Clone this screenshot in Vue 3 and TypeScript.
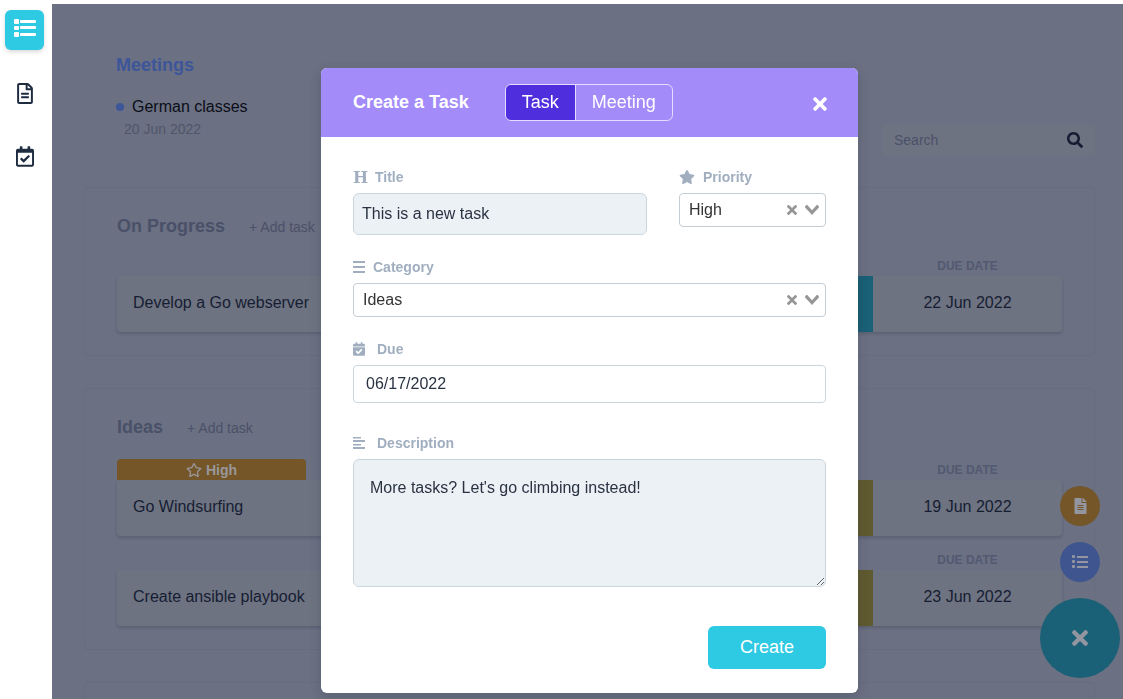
<script setup lang="ts">
import { ref } from 'vue'

interface Task {
  name: string
  due: string
  status: 'ideas' | 'progress'
  high?: boolean
}
interface Group {
  title: string
  tasks: Task[]
}

const groups: Group[] = [
  { title: 'On Progress', tasks: [{ name: 'Develop a Go webserver', due: '22 Jun 2022', status: 'progress' }] },
  {
    title: 'Ideas',
    tasks: [
      { name: 'Go Windsurfing', due: '19 Jun 2022', status: 'ideas', high: true },
      { name: 'Create ansible playbook', due: '23 Jun 2022', status: 'ideas' },
    ],
  },
]

const kind = ref<'Task' | 'Meeting'>('Task')
const title = ref('This is a new task')
const priority = ref('High')
const category = ref('Ideas')
const due = ref('06/17/2022')
const description = ref("More tasks? Let's go climbing instead!")

const times =
  'M242.72 256l100.07-100.07c12.28-12.28 12.28-32.19 0-44.48l-22.24-22.24c-12.28-12.28-32.19-12.28-44.48 0L176 189.28 75.93 89.21c-12.28-12.28-32.19-12.28-44.48 0L9.21 111.45c-12.28 12.28-12.28 32.19 0 44.48L109.28 256 9.21 356.07c-12.28 12.28-12.28 32.19 0 44.48l22.24 22.24c12.28 12.28 32.2 12.28 44.48 0L176 322.72l100.07 100.07c12.28 12.28 32.2 12.28 44.48 0l22.24-22.24c12.28-12.28 12.28-32.19 0-44.48L242.72 256z'
const clearMark =
  'M6.895455 5l2.842897-2.842898c.348864-.348863.348864-.914488 0-1.263636L9.106534.261648c-.348864-.348864-.914489-.348864-1.263636 0L5 3.104545 2.157102.261648c-.348863-.348864-.914488-.348864-1.263636 0L.261648.893466c-.348864.348864-.348864.914489 0 1.263636L3.104545 5 .261648 7.842898c-.348864.348863-.348864.914488 0 1.263636l.631818.631818c.348864.348864.914773.348864 1.263636 0L5 6.895455l2.842898 2.842897c.348863.348864.914772.348864 1.263636 0l.631818-.631818c.348864-.348864.348864-.914489 0-1.263636L6.895455 5z'
const chevron =
  'M9.211364 7.59931l4.48338-4.867229c.407008-.441854.407008-1.158247 0-1.60046l-.73712-.80023c-.407008-.441854-1.066904-.441854-1.474243 0L7 5.198617 2.51662.33139c-.407008-.441853-1.066904-.441853-1.474243 0l-.737121.80023c-.407008.441854-.407008 1.158248 0 1.600461l4.48338 4.867228L7 10l2.211364-2.40069z'
</script>

<template>
  <div class="shell">
    <nav class="sidebar" aria-label="Main">
      <button class="nav active" type="button" aria-label="Tasks">
        <svg width="22" height="18" viewBox="0 0 22 18" fill="currentColor">
          <rect x="0" y="0" width="5" height="5" rx="1" /><rect x="6" y="1" width="16" height="3" rx="1" />
          <rect x="0" y="7" width="5" height="4" rx="1" /><rect x="6" y="7" width="16" height="3" rx="1" />
          <rect x="0" y="13" width="5" height="5" rx="1" /><rect x="6" y="14" width="16" height="3" rx="1" />
        </svg>
      </button>
      <button class="nav" type="button" aria-label="Notes">
        <svg width="16" height="21" viewBox="0 0 384 512" fill="currentColor">
          <path d="M288 248v28c0 6.600-5.400 12-12 12H108c-6.600 0-12-5.400-12-12v-28c0-6.600 5.400-12 12-12h168c6.600 0 12 5.400 12 12zm-12 72H108c-6.600 0-12 5.400-12 12v28c0 6.600 5.400 12 12 12h168c6.600 0 12-5.400 12-12v-28c0-6.600-5.400-12-12-12zm108-188.100V464c0 26.500-21.500 48-48 48H48c-26.500 0-48-21.500-48-48V48C0 21.500 21.500 0 48 0h204.100C264.800 0 277 5.100 286 14.100L369.900 98c9 8.900 14.100 21.200 14.100 33.900zm-128-80V128h76.100L256 51.900zM336 464V176H232c-13.300 0-24-10.700-24-24V48H48v416h288z" />
        </svg>
      </button>
      <button class="nav" type="button" aria-label="Meetings">
        <svg width="18" height="21" viewBox="0 0 448 512" fill="currentColor">
          <path d="M400 64h-48V12c0-6.627-5.373-12-12-12h-40c-6.627 0-12 5.373-12 12v52H160V12c0-6.627-5.373-12-12-12h-40c-6.627 0-12 5.373-12 12v52H48C21.490 64 0 85.490 0 112v352c0 26.510 21.490 48 48 48h352c26.510 0 48-21.490 48-48V112c0-26.510-21.490-48-48-48zm-6 400H54a6 6 0 0 1-6-6V160h352v298a6 6 0 0 1-6 6zm-52.849-200.650L198.842 404.519c-4.705 4.667-12.303 4.637-16.971-.068l-75.091-75.699c-4.667-4.705-4.637-12.303.068-16.971l22.719-22.536c4.705-4.667 12.303-4.637 16.970.069l44.104 44.461 111.072-110.181c4.705-4.667 12.303-4.637 16.971.068l22.536 22.718c4.667 4.705 4.636 12.303-.069 16.970z" />
        </svg>
      </button>
    </nav>

    <main class="stage">
      <header class="top">
        <section class="meetings">
          <h2>Meetings</h2>
          <p class="meeting"><i class="dot"></i>German classes</p>
          <p class="when">20 Jun 2022</p>
        </section>
        <div class="search">
          <input type="text" placeholder="Search" aria-label="Search" />
          <button type="button" aria-label="Search tasks">
            <svg width="16" height="16" viewBox="0 0 512 512" fill="currentColor">
              <path d="M505 442.700L405.300 343c-4.500-4.500-10.600-7-17-7H372c27.600-35.300 44-79.700 44-128C416 93.100 322.900 0 208 0S0 93.100 0 208s93.100 208 208 208c48.300 0 92.700-16.400 128-44v16.300c0 6.400 2.500 12.500 7 17l99.700 99.700c9.400 9.400 24.600 9.400 33.900 0l28.300-28.300c9.400-9.400 9.400-24.600.100-34zM208 336c-70.700 0-128-57.200-128-128 0-70.700 57.200-128 128-128 70.700 0 128 57.200 128 128 0 70.700-57.200 128-128 128z" />
            </svg>
          </button>
        </div>
      </header>

      <section v-for="g in groups" :key="g.title" class="panel">
        <div class="panel-head">
          <h3>{{ g.title }}</h3>
          <button type="button">+ Add task</button>
        </div>
        <div class="tasks">
          <article v-for="t in g.tasks" :key="t.name" class="task">
            <div class="captions" :class="{ flagged: t.high }">
              <span v-if="t.high" class="badge">
                <svg width="16" height="14" viewBox="0 0 576 512" fill="currentColor">
                  <path d="M528.100 171.500L382 150.200 316.700 17.800c-11.700-23.600-45.600-23.900-57.400 0L194 150.200 47.900 171.500c-26.200 3.800-36.700 36.100-17.700 54.600l105.700 103-25 145.500c-4.500 26.300 23.200 46 46.400 33.700L288 439.600l130.700 68.700c23.200 12.200 50.900-7.400 46.400-33.700l-25-145.500 105.700-103c19-18.500 8.500-50.800-17.700-54.600zM388.600 312.300l23.700 138.400L288 385.400l-124.300 65.300 23.700-138.400-100.600-98 139-20.200 62.200-126 62.200 126 139 20.200-100.600 98z" />
                </svg>
                High
              </span>
              <span class="due-label">DUE DATE</span>
            </div>
            <div class="card">
              <span class="name">{{ t.name }}</span>
              <span class="status" :class="t.status"></span>
              <span class="date">{{ t.due }}</span>
            </div>
          </article>
        </div>
      </section>
      <section class="panel rest"></section>
    </main>

    <div class="fabs">
      <button class="fab note" type="button" aria-label="New note">
        <svg width="13" height="16" viewBox="0 0 384 512" fill="currentColor">
          <path d="M224 136V0H24C10.700 0 0 10.700 0 24v464c0 13.300 10.700 24 24 24h336c13.300 0 24-10.700 24-24V160H248c-13.200 0-24-10.800-24-24zm64 236c0 6.600-5.400 12-12 12H108c-6.600 0-12-5.400-12-12v-8c0-6.600 5.400-12 12-12h168c6.600 0 12 5.400 12 12v8zm0-64c0 6.600-5.400 12-12 12H108c-6.600 0-12-5.400-12-12v-8c0-6.600 5.400-12 12-12h168c6.600 0 12 5.400 12 12v8zm0-72v8c0 6.600-5.400 12-12 12H108c-6.600 0-12-5.400-12-12v-8c0-6.600 5.400-12 12-12h168c6.600 0 12 5.400 12 12zm96-114.100v6.100H256V0h6.100c6.400 0 12.500 2.500 17 7l97.900 98c4.500 4.500 7 10.600 7 16.900z" />
        </svg>
      </button>
      <button class="fab list" type="button" aria-label="New task">
        <svg width="16" height="14" viewBox="0 0 16 14" fill="currentColor">
          <rect x="0" y="0" width="3" height="3" rx="1" /><rect x="5" y="1" width="11" height="2" />
          <rect x="0" y="5" width="3" height="3" rx="1" /><rect x="5" y="6" width="11" height="2" />
          <rect x="0" y="10" width="3" height="3" rx="1" /><rect x="5" y="11" width="11" height="2" />
        </svg>
      </button>
      <button class="fab main" type="button" aria-label="Close menu">
        <svg width="16" height="24" viewBox="0 0 352 512" fill="currentColor"><path :d="times" /></svg>
      </button>
    </div>

    <div class="overlay">
      <form class="modal" role="dialog" aria-labelledby="modal-title" @submit.prevent>
        <header class="modal-head">
          <h1 id="modal-title">Create a Task</h1>
          <div class="toggle">
            <button type="button" :class="{ on: kind === 'Task' }" @click="kind = 'Task'">Task</button>
            <button type="button" :class="{ on: kind === 'Meeting' }" @click="kind = 'Meeting'">Meeting</button>
          </div>
          <button class="close" type="button" aria-label="Close">
            <svg width="14" height="20" viewBox="0 0 352 512" fill="currentColor"><path :d="times" /></svg>
          </button>
        </header>

        <div class="modal-body">
          <div class="row">
            <div class="field grow">
              <label for="f-title"><span class="h-mark" aria-hidden="true">H</span>Title</label>
              <input id="f-title" v-model="title" class="text tinted" type="text" />
            </div>
            <div class="field narrow">
              <label for="f-priority">
                <svg width="16" height="14" viewBox="0 0 576 512" fill="currentColor">
                  <path d="M259.300 17.800L194 150.200 47.900 171.500c-26.200 3.800-36.700 36.100-17.700 54.600l105.700 103-25 145.500c-4.500 26.300 23.200 46 46.400 33.700L288 439.600l130.700 68.700c23.200 12.200 50.900-7.400 46.400-33.700l-25-145.500 105.700-103c19-18.500 8.500-50.800-17.700-54.600L382 150.200 316.700 17.800c-11.700-23.600-45.600-23.900-57.400 0z" />
                </svg>Priority
              </label>
              <div class="pick">
                <select id="f-priority" v-model="priority"><option>High</option><option>Low</option></select>
                <div class="marks">
                  <button type="button" aria-label="Clear priority" @click="priority = ''">
                    <svg width="10" height="10" fill="currentColor"><path :d="clearMark" /></svg>
                  </button>
                  <svg width="14" height="10" fill="currentColor"><path :d="chevron" /></svg>
                </div>
              </div>
            </div>
          </div>

          <div class="field">
            <label for="f-category">
              <svg width="12" height="12" viewBox="0 0 12 12" fill="currentColor">
                <rect x="0" y="0" width="12" height="2" /><rect x="0" y="5" width="12" height="2" /><rect x="0" y="10" width="12" height="2" />
              </svg>Category
            </label>
            <div class="pick">
              <select id="f-category" v-model="category"><option>Ideas</option><option>On Progress</option></select>
              <div class="marks">
                <button type="button" aria-label="Clear category" @click="category = ''">
                  <svg width="10" height="10" fill="currentColor"><path :d="clearMark" /></svg>
                </button>
                <svg width="14" height="10" fill="currentColor"><path :d="chevron" /></svg>
              </div>
            </div>
          </div>

          <div class="field">
            <label for="f-due" class="wide">
              <svg width="12" height="14" viewBox="0 0 448 512" fill="currentColor">
                <path d="M436 160H12c-6.627 0-12-5.373-12-12v-36c0-26.510 21.490-48 48-48h48V12c0-6.627 5.373-12 12-12h40c6.627 0 12 5.373 12 12v52h128V12c0-6.627 5.373-12 12-12h40c6.627 0 12 5.373 12 12v52h48c26.510 0 48 21.490 48 48v36c0 6.627-5.373 12-12 12zM12 192h424c6.627 0 12 5.373 12 12v260c0 26.510-21.490 48-48 48H48c-26.510 0-48-21.490-48-48V204c0-6.627 5.373-12 12-12zm333.296 95.947l-28.169-28.398c-4.667-4.705-12.265-4.736-16.970-.068L194.120 364.665l-45.980-46.352c-4.667-4.705-12.266-4.736-16.971-.068l-28.397 28.170c-4.705 4.667-4.736 12.265-.068 16.970l82.601 83.269c4.667 4.705 12.265 4.736 16.970.068l142.953-141.805c4.705-4.667 4.736-12.265.068-16.970z" />
              </svg>Due
            </label>
            <input id="f-due" v-model="due" class="text date-input" type="text" />
          </div>

          <div class="field last">
            <label for="f-desc" class="wide">
              <svg width="12" height="12" viewBox="0 0 12 12" fill="currentColor">
                <rect x="0" y="0" width="8" height="1.500" /><rect x="0" y="3" width="12" height="2" />
                <rect x="0" y="7" width="8" height="1.500" /><rect x="0" y="10" width="12" height="2" />
              </svg>Description
            </label>
            <textarea id="f-desc" v-model="description" class="text tinted"></textarea>
          </div>

          <button class="create" type="submit">Create</button>
        </div>
      </form>
    </div>
  </div>
</template>

<style>
body {
  background: #ffffff;
}
</style>

<style scoped>
.shell,
.shell * {
  box-sizing: border-box;
}
.shell {
  display: flex;
  height: 100vh;
  overflow: hidden;
  font-family: 'Liberation Sans', Arial, sans-serif;
  font-size: 16px;
  color: #161d33;
}
h1, h2, h3, p {
  margin: 0;
}
button, input, select, textarea {
  font: inherit;
  color: inherit;
  margin: 0;
}
button {
  border: 0;
  padding: 0;
  background: none;
  cursor: pointer;
}
svg {
  display: block;
  flex: none;
}

.sidebar {
  width: 52px;
  flex: none;
  display: flex;
  flex-direction: column;
  gap: 23px;
  padding: 10px 8px 0 5px;
}
.nav {
  height: 40px;
  display: flex;
  align-items: center;
  justify-content: center;
  border-radius: 6px;
  color: #1f2c40;
}
.nav.active {
  background: #2ec9e2;
  color: #ffffff;
  padding-bottom: 4px;
  box-shadow: 0 2px 4px rgba(0, 0, 0, 0.15);
}

.stage {
  flex: 1;
  min-width: 0;
  margin-top: 4px;
  padding: 50px 28px 0 32px;
  background: #6b7082;
  overflow: hidden;
}
.top {
  display: flex;
  justify-content: space-between;
  align-items: flex-end;
  padding-left: 32px;
  margin-bottom: 32px;
}
.meetings {
  height: 101px;
}
h2 {
  font-size: 18px;
  line-height: 22px;
  color: #3d569a;
}
.meeting {
  display: flex;
  align-items: center;
  gap: 8px;
  margin-top: 21px;
  line-height: 20px;
  color: #0b0e17;
}
.dot {
  width: 8px;
  height: 8px;
  border-radius: 50%;
  background: #3d569a;
}
.when {
  margin-top: 3px;
  padding-left: 8px;
  font-size: 14px;
  line-height: 18px;
  color: #50566a;
}
.search {
  display: flex;
  align-items: center;
  width: 213px;
  height: 30px;
  padding: 0 12px;
  background: #6e7381;
  border-radius: 4px;
}
.search input {
  flex: 1;
  min-width: 0;
  border: 0;
  padding: 0;
  outline: 0;
  background: none;
  font-size: 14px;
}
.search input::placeholder {
  color: #4b5169;
  opacity: 1;
}

.panel {
  margin-bottom: 32px;
  padding: 27px 32px 23px;
  border: 1px solid #676c7e;
  border-radius: 4px;
}
.rest {
  height: 120px;
}
.panel-head {
  display: flex;
  align-items: center;
  gap: 24px;
  height: 22px;
  margin-bottom: 21px;
}
h3 {
  font-size: 18px;
  color: #495068;
}
.panel-head button {
  padding-top: 2px;
  font-size: 14px;
  color: #4b5169;
}
.tasks {
  display: flex;
  flex-direction: column;
  gap: 16px;
}
.captions,
.card {
  display: grid;
  grid-template-columns: repeat(5, 1fr);
}
.captions {
  height: 18px;
  grid-template-rows: 100%;
}
.captions.flagged {
  height: 21px;
}
.badge {
  display: flex;
  align-items: center;
  justify-content: center;
  gap: 4px;
  background: #745628;
  border-radius: 4px 4px 0 0;
  font-size: 14px;
  font-weight: bold;
  color: #9a979a;
}
.due-label {
  grid-column: 5;
  align-self: end;
  text-align: center;
  font-size: 12px;
  font-weight: bold;
  line-height: 20px;
  color: #525971;
}
.card {
  height: 56px;
  line-height: 54px;
  background: #6e7381;
  border-radius: 4px;
  box-shadow: 0 2px 3px rgba(30, 35, 60, 0.2);
}
.name {
  grid-column: 1 / 4;
  padding-left: 16px;
}
.status {
  grid-column: 4;
}
.status.progress {
  background: #1a6076;
}
.status.ideas {
  background: #5f5a30;
}
.date {
  text-align: center;
}

.fabs {
  position: fixed;
  right: 3px;
  bottom: 21px;
  display: flex;
  flex-direction: column;
  align-items: center;
  gap: 16px;
}
.fab {
  width: 40px;
  height: 40px;
  display: flex;
  align-items: center;
  justify-content: center;
  border-radius: 50%;
  color: #9396a0;
}
.fab.note {
  background: #745628;
}
.fab.list {
  background: #3f5590;
}
.fab.main {
  width: 80px;
  height: 80px;
  background: #1a6076;
}

.overlay {
  position: fixed;
  inset: 0 0 0 52px;
  display: flex;
  justify-content: center;
  align-items: flex-start;
  padding: 68px 0 0 4px;
  pointer-events: none;
}
.modal {
  width: 537px;
  max-width: 100%;
  border-radius: 6px;
  overflow: hidden;
  background: #ffffff;
  box-shadow: 0 4px 12px rgba(30, 35, 60, 0.2);
  pointer-events: auto;
}
.modal-head {
  display: flex;
  align-items: center;
  padding: 16px 31px 16px 32px;
  background: #a38bf9;
  color: #ffffff;
}
h1 {
  font-size: 18px;
}
.toggle {
  display: flex;
  height: 37px;
  margin-left: 36px;
  border: 1px solid #e4dcfd;
  border-radius: 6px;
  overflow: hidden;
  font-size: 18px;
}
.toggle button {
  padding: 0 16px;
}
.toggle button + button {
  border-left: 1px solid #e4dcfd;
}
.toggle .on {
  background: #4f2fdd;
}
.close {
  margin-left: auto;
  padding-top: 3px;
}

.modal-body {
  display: flex;
  flex-direction: column;
  gap: 24px;
  padding: 32px 32px 24px;
}
.row {
  display: flex;
  align-items: flex-start;
  gap: 32px;
}
.field {
  display: flex;
  flex-direction: column;
  gap: 8px;
}
.grow {
  flex: 1;
}
.narrow {
  width: 147px;
}
.last {
  margin-top: 8px;
}
label {
  display: flex;
  align-items: center;
  gap: 8px;
  height: 16px;
  font-size: 14px;
  font-weight: bold;
  color: #a0aec0;
}
label.wide {
  gap: 12px;
}
.h-mark {
  width: 14px;
  font-family: 'DejaVu Serif', serif;
  font-size: 16px;
}
.text {
  width: 100%;
  border: 1px solid #cbd5dc;
  border-radius: 4px;
  outline: 0;
  background: #ffffff;
  color: #2a3342;
}
.tinted {
  background: #ecf1f6;
  border-radius: 6px;
}
input.tinted {
  height: 42px;
  padding: 0 8px;
}
.date-input {
  height: 38px;
  padding: 0 12px;
}
textarea {
  display: block;
  height: 128px;
  padding: 16px;
  line-height: 24px;
  resize: vertical;
}
.pick {
  display: grid;
  align-items: center;
}
.pick > * {
  grid-area: 1 / 1;
}
select {
  appearance: none;
  width: 100%;
  height: 34px;
  padding: 0 48px 2px 9px;
  border: 1px solid #c5ccd2;
  border-radius: 4px;
  outline: 0;
  background: #ffffff;
  color: #333333;
}
.marks {
  justify-self: end;
  display: flex;
  align-items: center;
  gap: 8px;
  padding-right: 7px;
  color: #969696;
  pointer-events: none;
}
.marks button {
  pointer-events: auto;
}
.create {
  align-self: flex-end;
  width: 118px;
  height: 43px;
  margin-top: 15px;
  border-radius: 6px;
  background: #2ec9e2;
  color: #ffffff;
  font-size: 18px;
}
</style>
